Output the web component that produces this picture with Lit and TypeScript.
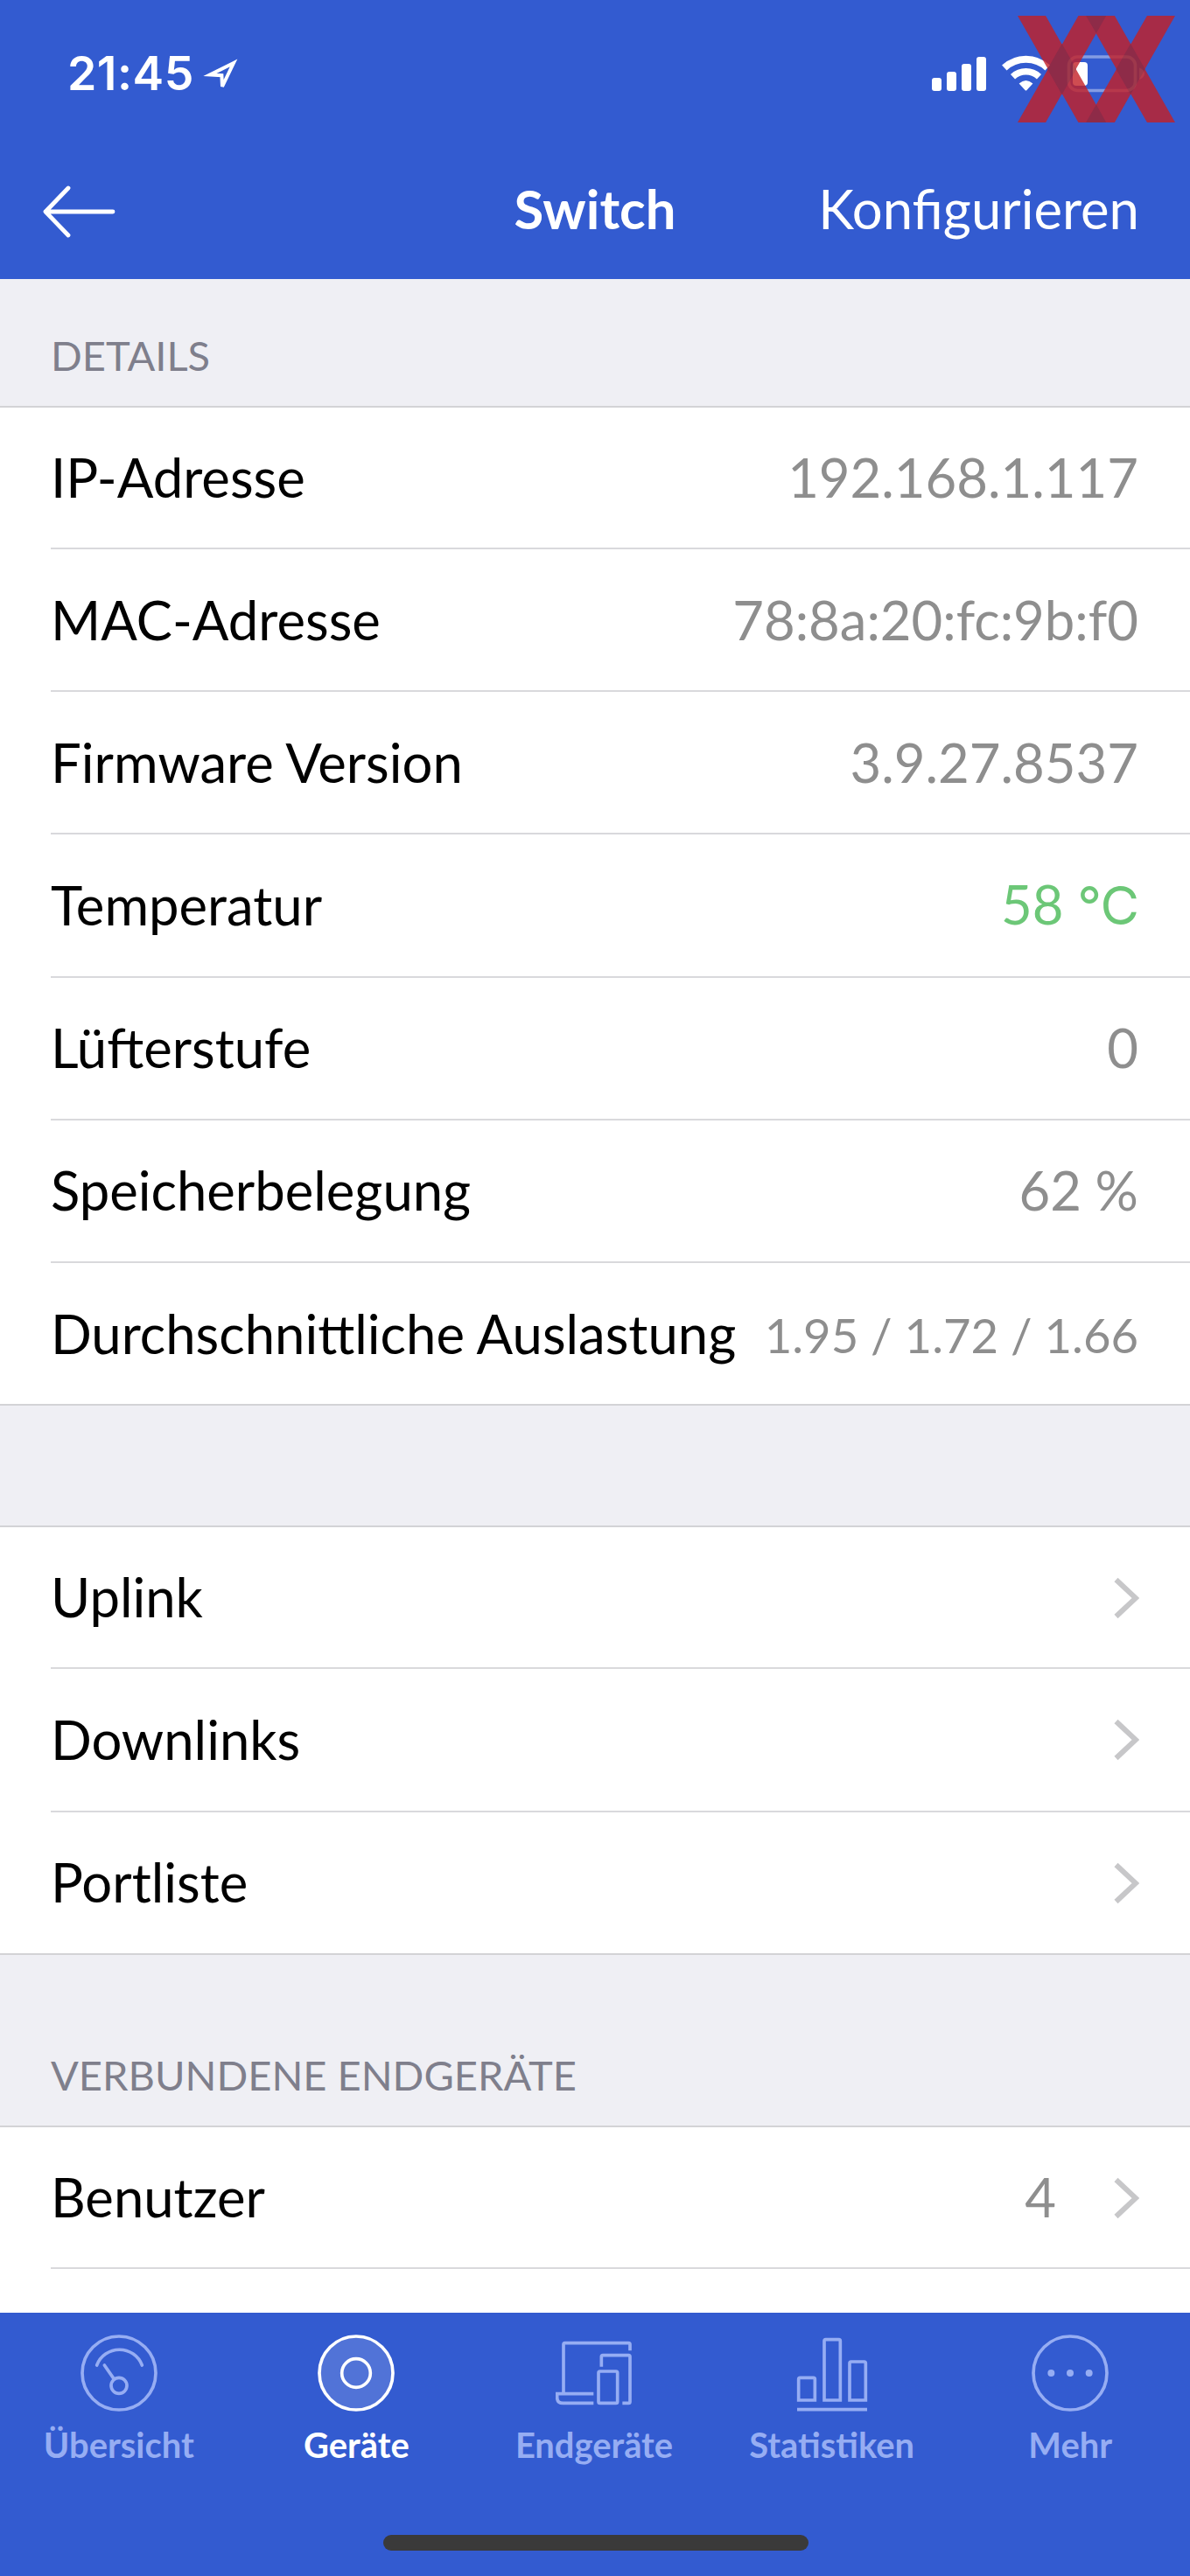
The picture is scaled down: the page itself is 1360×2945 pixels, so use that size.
import { LitElement, html, svg, css, nothing } from "lit";
import { customElement, property } from "lit/decorators.js";

interface Row {
  label: string;
  value?: string;
  unit?: string;
  tone?: "ok" | "small";
  link?: boolean;
}

const DETAILS: Row[] = [
  { label: "IP-Adresse", value: "192.168.1.117" },
  { label: "MAC-Adresse", value: "78:8a:20:fc:9b:f0" },
  { label: "Firmware Version", value: "3.9.27.8537" },
  { label: "Temperatur", value: "58 ", unit: "°C", tone: "ok" },
  { label: "Lüfterstufe", value: "0" },
  { label: "Speicherbelegung", value: "62 %" },
  { label: "Durchschnittliche Auslastung", value: "1.95 / 1.72 / 1.66", tone: "small" },
];

const LINKS: Row[] = [
  { label: "Uplink", link: true },
  { label: "Downlinks", link: true },
  { label: "Portliste", link: true },
];

const CLIENTS: Row[] = [{ label: "Benutzer", value: "4", link: true }];

const TABS = [
  {
    label: "Übersicht",
    icon: svg`<circle cx="132" cy="132" r="126"/><path d="M56 105A83 83 0 0 1 211 105M82 105L114 151" stroke-linecap="round"/><circle cx="132" cy="175" r="27"/>`,
  },
  {
    label: "Geräte",
    active: true,
    icon: svg`<circle cx="132" cy="132" r="126" fill="currentColor" fill-opacity=".15"/><circle cx="132" cy="132" r="49"/>`,
  },
  {
    label: "Endgeräte",
    icon: svg`<path d="M27 198V34q0-5 5-5H250q5 0 5 5V55M130 203H5V215q0 20 20 20H130M157 110V76q0-5 5-5H250q5 0 5 5V230q0 5-5 5H229"/><rect x="147" y="126" width="65" height="109" rx="5"/>`,
  },
  {
    label: "Statistiken",
    icon: svg`<path d="M17 225V153q0-5 5-5H68q5 0 5 5V225ZM105 225V22q0-5 5-5H155q5 0 5 5V225ZM192 225V98q0-5 5-5H242q5 0 5 5V225ZM12 257H252"/>`,
  },
  {
    label: "Mehr",
    icon: svg`<circle cx="132" cy="132" r="126"/><g fill="currentColor" stroke="none"><circle cx="67" cy="132" r="12"/><circle cx="132" cy="132" r="12"/><circle cx="197" cy="132" r="12"/></g>`,
  },
];

@customElement("status-bar")
class StatusBar extends LitElement {
  static styles = css`
    :host {
      display: flex;
      height: 166px;
      box-sizing: border-box;
      padding: 62px 52px 0 77px;
      align-items: flex-start;
      position: relative;
    }
    .time {
      font: 600 53.500px/44px Inter, sans-serif;
      letter-spacing: 0.500px;
    }
    .location {
      width: 40px;
      height: 40px;
      margin: 5px 0 0 10px;
    }
    .signals {
      margin-left: auto;
      width: 245px;
      height: 44px;
    }
    .mark {
      position: absolute;
      left: 1163px;
      top: 18px;
      width: 180px;
      height: 122px;
      opacity: 0.8;
    }
  `;
  render() {
    return html`
      <span class="time">21:45</span>
      <svg class="location" viewBox="0 0 40 40" fill="none" stroke="#fff" stroke-width="4">
        <path d="M35 5L8 18.500L21.400 19.200L22 32Z" />
      </svg>
      <svg class="signals" viewBox="1063 61 245 44" fill="#fff">
        <rect x="1065" y="88" width="11" height="15" rx="3" />
        <rect x="1082" y="81" width="11" height="22" rx="3" />
        <rect x="1099" y="72" width="11" height="31" rx="3" />
        <rect x="1116" y="64" width="11" height="39" rx="3" />
        <g fill="none" stroke="#fff">
          <path d="M1147.800 76.500A36 36 0 0 1 1197.200 76.500" stroke-width="8" />
          <path d="M1157.500 86.700A22 22 0 0 1 1187.500 86.700" stroke-width="7.500" />
        </g>
        <path d="M1164.600 94.500Q1172.500 87.500 1180.400 94.500L1173.500 102Q1172.500 103 1171.500 102Z" />
        <rect x="1221.500" y="64" width="76" height="38.500" rx="10" fill="none" stroke="#fff" stroke-opacity=".4" stroke-width="3.600" />
        <rect x="1226" y="70" width="17" height="27" rx="4" />
        <path d="M1302 76.500Q1308 79 1308 83.300T1302 90Z" fill-opacity=".4" />
      </svg>
      <svg class="mark" viewBox="369 54 539 365" preserveAspectRatio="none">
        <path fill="#c42026" d="M369 54H465L672 419H577ZM577 54H672L465 419H369ZM603 54H701L908 419H812ZM812 54H908L701 419H603Z" />
        <path fill="#a52027" d="M603 54H672L638 114ZM603 419H672L638 358ZM520.500 150L570 236.500L520.500 323L471 236.500ZM755.500 150L805 236.500L755.500 323L706 236.500Z" />
      </svg>
    `;
  }
}

@customElement("nav-bar")
class NavBar extends LitElement {
  static styles = css`
    :host {
      display: grid;
      grid-template-columns: 1fr auto 1fr;
      align-items: center;
      height: 153px;
      box-sizing: border-box;
      padding: 0 58px 10px 58px;
    }
    .back {
      width: 86px;
      height: 60px;
      margin: 8px 0 0 -11px;
    }
    .title {
      font-weight: 700;
    }
    .action {
      justify-self: end;
    }
  `;
  render() {
    return html`
      <svg class="back" viewBox="0 0 86 60" fill="none" stroke="#fff" stroke-width="4.800" stroke-linecap="round" stroke-linejoin="round">
        <path d="M31 3L5 30L31 57M5 30H82" />
      </svg>
      <span class="title">Switch</span>
      <span class="action">Konfigurieren</span>
    `;
  }
}

@customElement("row-list")
class RowList extends LitElement {
  static styles = css`
    :host {
      display: block;
      background: #fff;
      border-top: 2px solid #d3d3d6;
      color: #000;
    }
    .row {
      display: flex;
      align-items: center;
      height: 163.200px;
      box-sizing: border-box;
      margin-left: 58px;
      padding: 0 59px 2px 0;
      border-bottom: 2px solid #d9d9dc;
      white-space: nowrap;
    }
    .row:first-child {
      height: 162.100px;
    }
    .row.last {
      margin-left: 0;
      padding-left: 58px;
      border-bottom-color: #d3d3d6;
    }
    .value {
      margin-left: auto;
      color: #8e8e8e;
      white-space: pre;
    }
    .ok {
      color: #6cc777;
    }
    .unit {
      font-family: Inter, sans-serif;
      font-size: 61px;
      letter-spacing: -1px;
    }
    .small {
      font-size: 54.400px;
      padding-top: 5px;
    }
    .chevron {
      width: 30px;
      height: 48px;
      margin: 3px -1px 0 auto;
      flex: none;
    }
    .value + .chevron {
      margin-left: 65px;
    }
  `;
  @property({ attribute: false }) rows: Row[] = [];
  @property({ type: Boolean }) open = false;
  render() {
    return this.rows.map(
      (r, i) => html`
        <div class="row ${!this.open && i === this.rows.length - 1 ? "last" : ""}">
          <span>${r.label}</span>
          ${r.value
            ? html`<span class="value ${r.tone ?? ""}">${r.value}${r.unit ? html`<span class="unit">${r.unit}</span>` : nothing}</span>`
            : nothing}
          ${r.link
            ? html`<svg class="chevron" viewBox="0 0 30 48" fill="none" stroke="#c7c7c9" stroke-width="6">
                <path d="M3.500 3L26 24L3.500 45" />
              </svg>`
            : nothing}
        </div>
      `
    );
  }
}

@customElement("tab-bar")
class TabBar extends LitElement {
  static styles = css`
    :host {
      display: flex;
      flex-direction: column;
      align-items: center;
      height: 301px;
      box-sizing: border-box;
      padding: 25px 0 29px;
      background: #335bd0;
    }
    .tabs {
      display: grid;
      grid-template-columns: repeat(5, 1fr);
      width: 100%;
      box-sizing: border-box;
      padding-right: 2px;
    }
    .tab {
      display: flex;
      flex-direction: column;
      align-items: center;
      gap: 14px;
      color: #96adf3;
      font: 700 39.900px/48px Lato, sans-serif;
    }
    .tab:last-child {
      margin-right: -2px;
    }
    .tab.active {
      color: #fff;
    }
    .icon {
      width: 88px;
      height: 88px;
    }
    .home {
      width: 486px;
      height: 18px;
      border-radius: 9px;
      background: #3a3a3a;
      margin: auto 0 0 1px;
    }
  `;
  render() {
    return html`
      <div class="tabs">
        ${TABS.map(
          (t) => html`<div class="tab ${t.active ? "active" : ""}">
            <svg class="icon" viewBox="0 0 264 264" fill="none" stroke="currentColor" stroke-width="11">${t.icon}</svg>
            <span>${t.label}</span>
          </div>`
        )}
      </div>
      <div class="home"></div>
    `;
  }
}

@customElement("app-root")
class AppRoot extends LitElement {
  static styles = css`
    :host {
      display: flex;
      flex-direction: column;
      width: 1360px;
      height: 2945px;
      overflow: hidden;
      background: #efeff4;
      font: 400 61.600px/74px Lato, sans-serif;
    }
    .top {
      background: #335bd0;
      color: #fff;
      flex: none;
    }
    .heading {
      display: flex;
      align-items: flex-end;
      flex: none;
      box-sizing: border-box;
      height: 145px;
      padding: 0 58px 29px;
      font-size: 47.050px;
      line-height: 57px;
      color: #7f7f8c;
    }
    .heading.tall {
      height: 195.500px;
    }
    .spacer {
      height: 137px;
      flex: none;
    }
    .clients {
      flex: 1;
      min-height: 0;
    }
  `;
  render() {
    return html`
      <div class="top">
        <status-bar></status-bar>
        <nav-bar></nav-bar>
      </div>
      <div class="heading">DETAILS</div>
      <row-list .rows=${DETAILS}></row-list>
      <div class="spacer"></div>
      <row-list .rows=${LINKS}></row-list>
      <div class="heading tall">VERBUNDENE ENDGERÄTE</div>
      <row-list class="clients" .rows=${CLIENTS} open></row-list>
      <tab-bar></tab-bar>
    `;
  }
}
